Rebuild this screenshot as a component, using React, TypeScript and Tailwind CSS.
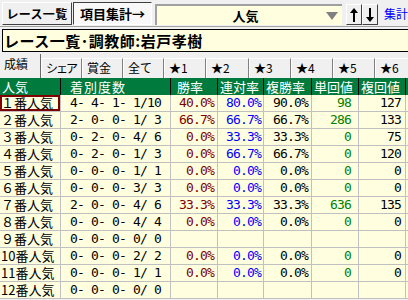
import React from "react";

type Row = {
  label: string;
  count: string;
  win: string;
  ren: string;
  fuku: string;
  tan: string;
  fukuVal: string;
};

const rows: Row[] = [
  { label: "１番人気", count: "4- 4- 1- 1/10", win: "40.0%", ren: "80.0%", fuku: "90.0%", tan: "98", fukuVal: "127" },
  { label: "２番人気", count: "2- 0- 0- 1/ 3", win: "66.7%", ren: "66.7%", fuku: "66.7%", tan: "286", fukuVal: "133" },
  { label: "３番人気", count: "0- 2- 0- 4/ 6", win: "0.0%", ren: "33.3%", fuku: "33.3%", tan: "0", fukuVal: "75" },
  { label: "４番人気", count: "0- 2- 0- 1/ 3", win: "0.0%", ren: "66.7%", fuku: "66.7%", tan: "0", fukuVal: "120" },
  { label: "５番人気", count: "0- 0- 0- 1/ 1", win: "0.0%", ren: "0.0%", fuku: "0.0%", tan: "0", fukuVal: "0" },
  { label: "６番人気", count: "0- 0- 0- 3/ 3", win: "0.0%", ren: "0.0%", fuku: "0.0%", tan: "0", fukuVal: "0" },
  { label: "７番人気", count: "2- 0- 0- 4/ 6", win: "33.3%", ren: "33.3%", fuku: "33.3%", tan: "636", fukuVal: "135" },
  { label: "８番人気", count: "0- 0- 0- 4/ 4", win: "0.0%", ren: "0.0%", fuku: "0.0%", tan: "0", fukuVal: "0" },
  { label: "９番人気", count: "0- 0- 0- 0/ 0", win: "", ren: "", fuku: "", tan: "", fukuVal: "" },
  { label: "10番人気", count: "0- 0- 0- 2/ 2", win: "0.0%", ren: "0.0%", fuku: "0.0%", tan: "0", fukuVal: "0" },
  { label: "11番人気", count: "0- 0- 0- 1/ 1", win: "0.0%", ren: "0.0%", fuku: "0.0%", tan: "0", fukuVal: "0" },
  { label: "12番人気", count: "0- 0- 0- 0/ 0", win: "", ren: "", fuku: "", tan: "", fukuVal: "" },
];

const tabs = [
  { name: "成績", w: "w-[41px]" },
  { name: "シェア", w: "w-[41px]" },
  { name: "賞金", w: "w-[41px]" },
  { name: "全て", w: "w-[41px]" },
  { name: "★1", w: "w-[42px]" },
  { name: "★2", w: "w-[43px]" },
  { name: "★3", w: "w-[42px]" },
  { name: "★4", w: "w-[42px]" },
  { name: "★5", w: "w-[42px]" },
  { name: "★6", w: "w-[42px]" },
];

const mono = "font-['DejaVu_Sans_Mono','Noto_Sans_CJK_JP',monospace] text-[13px] tracking-[-0.83px] whitespace-pre";

function Arrow({ up }: { up: boolean }) {
  return (
    <svg width="8" height="14" viewBox="0 0 8 14" className={up ? "" : "rotate-180"}>
      <path d="M4 0 L8 5 L5 5 L5 14 L3 14 L3 5 L0 5 Z" fill="#000" />
    </svg>
  );
}

function DataRow({ r, selected }: { r: Row; selected: boolean }) {
  return (
    <div className="flex h-[17px] shrink-0 border-b border-[#c0c0c0] bg-[#ffffe0] leading-[16px] text-black">
      <div
        className={`w-[61px] shrink-0 border-r border-[#c0c0c0] pl-px text-[13px] whitespace-nowrap ${
          selected ? "shadow-[inset_0_0_0_2px_#800000]" : ""
        }`}
      >
        {r.label}
      </div>
      <div className={`w-[110px] shrink-0 border-r border-[#c0c0c0] pl-[9px] ${mono}`}>{r.count}</div>
      <div className={`w-[47px] shrink-0 border-r border-[#c0c0c0] pr-[3px] text-right text-[#800000] ${mono}`}>{r.win}</div>
      <div className={`w-[46px] shrink-0 border-r border-[#c0c0c0] pr-[2px] text-right text-[#0000ff] ${mono}`}>{r.ren}</div>
      <div className={`w-[48px] shrink-0 border-r border-[#c0c0c0] pr-[3px] text-right ${mono}`}>{r.fuku}</div>
      <div className={`w-[47px] shrink-0 border-r border-[#c0c0c0] pr-[7px] text-right text-[#008000] ${mono}`}>{r.tan}</div>
      <div className={`w-[47px] shrink-0 border-r border-[#c0c0c0] pr-[4px] text-right ${mono}`}>{r.fukuVal}</div>
      <div className="flex-1" />
    </div>
  );
}

export default function App() {
  return (
    <div className="w-[408px] h-[300px] overflow-hidden bg-[#f0f0f0] font-['Noto_Sans_CJK_JP',sans-serif] flex flex-col">
      {/* Toolbar */}
      <div className="h-[27px] shrink-0 flex items-start border-b border-[#a0a0a0] pt-[2px] pl-[2px] whitespace-nowrap">
        <button className="w-[70px] h-[23px] shrink-0 border border-t-white border-l-white border-r-[#404040] border-b-[#404040] bg-[#f0f0f0] text-[12px] font-bold leading-[20px] tracking-[0.3px] text-black">
          レース一覧
        </button>
        <button className="ml-px w-[79px] h-[23px] shrink-0 border border-t-[#404040] border-l-[#404040] border-r-white border-b-white bg-[#f8f8f8] text-[13px] font-bold leading-[20px] text-black">
          項目集計→
        </button>
        <div className="ml-[3px] mt-[2px] w-[187px] h-[21px] shrink-0 border-t-2 border-l-2 border-[#a0a0a0] bg-[#ffffe0] flex items-center">
          <span className="flex-1 text-center text-[13px] font-bold text-black pl-[8px]">人気</span>
          <svg width="12" height="8" viewBox="0 0 12 8" className="mr-[4px]">
            <path d="M0 0 L12 0 L6 8 Z" fill="#808080" />
          </svg>
        </div>
        <button className="ml-[4px] mt-[2px] w-[16px] h-[21px] shrink-0 border border-t-white border-l-white border-r-[#404040] border-b-[#404040] bg-[#f0f0f0] flex items-center justify-center">
          <Arrow up />
        </button>
        <button className="w-[16px] mt-[2px] h-[21px] shrink-0 border border-t-white border-l-white border-r-[#404040] border-b-[#404040] bg-[#f0f0f0] flex items-center justify-center">
          <Arrow up={false} />
        </button>
        <span className="ml-[6px] mt-[3px] shrink-0 text-[12px] leading-[18px] text-[#0000ff]">集計</span>
      </div>

      {/* Title */}
      <div className="mt-[2px] ml-[2px] w-[420px] h-[23px] shrink-0 border border-black bg-[#ffffe0] pl-px text-[15px] font-bold leading-[21px] tracking-[0.5px] text-black">
        レース一覧･調教師:岩戸孝樹
      </div>

      {/* Tabs */}
      <div className="mt-px h-[25px] shrink-0 flex items-end">
        {tabs.map((t, i) =>
          i === 0 ? (
            <div
              key={t.name}
              className={`${t.w} h-[24px] shrink-0 border-r border-[#696969] pl-[4px] text-[12px] leading-[20px] text-black`}
            >
              {t.name}
            </div>
          ) : (
            <div
              key={t.name}
              className={`${t.w} h-[20px] shrink-0 border-l border-t border-white border-r border-r-[#808080] pl-[4px] text-[12px] leading-[18px] text-black whitespace-nowrap ${
                t.name === "シェア" ? "tracking-[-2px]" : ""
              }`}
            >
              {t.name}
            </div>
          )
        )}
      </div>

      {/* Header */}
      <div className="flex h-[17px] shrink-0 bg-[#007a3d] text-white text-[13px] leading-[17px] whitespace-nowrap">
        <div className="w-[61px] shrink-0 border-r border-black pl-[2px]">人気</div>
        <div className="w-[110px] shrink-0 border-r border-black pl-[9px] tracking-[1px]">着別度数</div>
        <div className="w-[47px] shrink-0 border-r border-black pl-[6px]">勝率</div>
        <div className="w-[46px] shrink-0 border-r border-black pl-[2px]">連対率</div>
        <div className="w-[48px] shrink-0 border-r border-black pl-[2px]">複勝率</div>
        <div className="w-[47px] shrink-0 border-r border-black pl-[2px]">単回値</div>
        <div className="w-[47px] shrink-0 border-r border-black pl-[2px]">複回値</div>
        <div className="flex-1" />
      </div>

      {/* Rows */}
      {rows.map((r, i) => (
        <DataRow key={r.label} r={r} selected={i === 0} />
      ))}
    </div>
  );
}
